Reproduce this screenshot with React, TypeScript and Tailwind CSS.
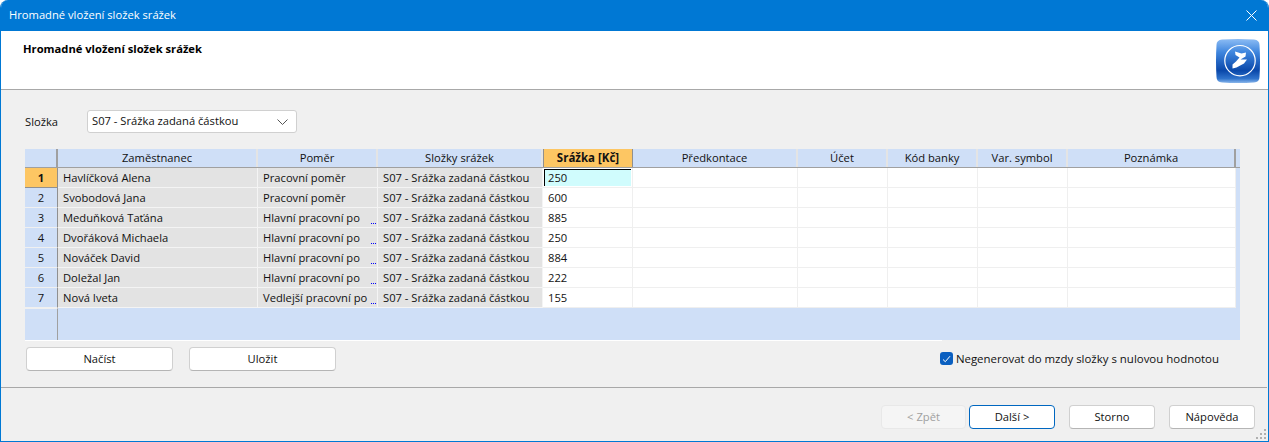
import React from 'react';

const rows = [
  ['Havlíčková Alena', 'Pracovní poměr', '250'],
  ['Svobodová Jana', 'Pracovní poměr', '600'],
  ['Meduňková Taťána', 'Hlavní pracovní po', '885'],
  ['Dvořáková Michaela', 'Hlavní pracovní po', '250'],
  ['Nováček David', 'Hlavní pracovní po', '884'],
  ['Doležal Jan', 'Hlavní pracovní po', '222'],
  ['Nová Iveta', 'Vedlejší pracovní po', '155'],
];

const emptyCols = ['w-[165px]', 'w-[90px]', 'w-[90px]', 'w-[90px]', 'w-[168px]'];

const Logo = () => (
  <svg width="44" height="44" viewBox="0 0 44 44">
    <defs>
      <linearGradient id="logoBg" x1="0" y1="0" x2="0" y2="1">
        <stop offset="0" stopColor="#8cbcf4" />
        <stop offset="0.3" stopColor="#3f86de" />
        <stop offset="0.72" stopColor="#0a48aa" />
        <stop offset="0.9" stopColor="#2f73cc" />
        <stop offset="1" stopColor="#8ab6ea" />
      </linearGradient>
    </defs>
    <path d="M6 0.5 Q22 -0.5 38 0.5 Q43.5 1 43.5 6 Q44.5 22 43.5 38 Q43.5 43 38 43.5 Q22 44.5 6 43.5 Q0.5 43 0.5 38 Q-0.5 22 0.5 6 Q0.5 1 6 0.5 Z" fill="url(#logoBg)" />
    <circle cx="24" cy="21.7" r="15.2" fill="none" stroke="#fff" strokeWidth="1.2" />
    <path d="M19 12.5 L25.5 14.5 L30 13.5 L29.5 17.5 L24.5 20.5 L31 20.5 L28 24.5 L20.5 28.5 L16.5 29.5 L16.5 25.5 L20 22.5 L23.5 18.5 L19.5 16 Z" fill="#fff" />
  </svg>
);

const Btn = ({ label, extra }: { label: string; extra: string }) => (
  <div className={`h-6 flex items-center justify-center rounded-[4px] border ${extra}`}>{label}</div>
);

export default function App() {
  return (
    <div className="relative w-[1269px] h-[442px] flex flex-col bg-[#f0f0f0] border-x border-b border-[#0078d4] rounded-t-[8px] overflow-hidden text-[11.2px] text-[#111111] font-['Open_Sans','Noto_Sans',sans-serif]">
      {/* title bar */}
      <div className="h-[31px] shrink-0 bg-[#0078d4] flex items-center justify-between pl-2 pr-[11px] text-white">
        <span>Hromadné vložení složek srážek</span>
        <svg width="11" height="11" viewBox="0 0 11 11" stroke="#fff" strokeWidth="1" fill="none">
          <path d="M0.5 0.5 L10.5 10.5 M10.5 0.5 L0.5 10.5" />
        </svg>
      </div>

      {/* header */}
      <div className="h-[59px] shrink-0 bg-white border-b border-[#a8a8a8] flex justify-between pl-[22px] pr-[8px]">
        <span className="mt-[10px] font-bold text-black leading-[16px]">Hromadné vložení složek srážek</span>
        <div className="mt-[8px]">
          <Logo />
        </div>
      </div>

      {/* picker */}
      <div className="flex items-center mt-[20px] pl-[24px] h-[23px] shrink-0">
        <span className="w-[62px] pt-[2px]">Složka</span>
        <div className="w-[210px] h-[23px] bg-white border border-[#d0d0d0] rounded-[3px] flex items-center justify-between pl-[4px] pr-[8px]">
          <span>S07 - Srážka zadaná částkou</span>
          <svg width="11" height="6" viewBox="0 0 11 6" fill="none" stroke="#555" strokeWidth="1">
            <path d="M0.5 0.5 L5.5 5.5 L10.5 0.5" />
          </svg>
        </div>
      </div>

      {/* grid */}
      <div className="ml-[24px] mt-[16px] w-[1215px] h-[191px] shrink-0 bg-[#cfdff7] flex flex-col overflow-hidden">
        <div className="flex h-[19px] shrink-0 border-b border-[#a0a0a0] text-center leading-[18px]">
          <div className="w-[33px] border-r-2 border-[#a0a0a0]" />
          <div className="w-[200px] border-r-2 border-[#e4e4e4]">Zaměstnanec</div>
          <div className="w-[120px] border-r-2 border-[#e4e4e4]">Poměr</div>
          <div className="w-[165px] border-r-2 border-[#e4e4e4]">Složky srážek</div>
          <div className="w-[90px] bg-[#fdc663] font-bold text-[11.5px] border-x border-[#909090]">Srážka [Kč]</div>
          <div className="w-[165px] border-r-2 border-[#e4e4e4]">Předkontace</div>
          <div className="w-[90px] border-r-2 border-[#e4e4e4]">Účet</div>
          <div className="w-[90px] border-r-2 border-[#e4e4e4]">Kód banky</div>
          <div className="w-[90px] border-r-2 border-[#e4e4e4]">Var. symbol</div>
          <div className="w-[168px] border-r-2 border-[#a0a0a0]">Poznámka</div>
        </div>
        {rows.map((r, i) => (
          <div key={i} className="flex h-5 shrink-0 leading-[19px]">
            <div className={`w-[33px] shrink-0 text-center border-r border-b border-r-[#909090] ${i === 0 ? 'bg-[#fdc663] font-bold border-b-[#909090]' : 'border-b-[#f0f0f0]'}`}>{i + 1}</div>
            <div className="w-[200px] shrink-0 bg-[#e3e3e3] border-r border-b border-[#f4f4f4] pl-[5px]">{r[0]}</div>
            <div className="relative w-[120px] shrink-0 bg-[#e3e3e3] border-r border-b border-[#f4f4f4] pl-[5px] whitespace-nowrap overflow-hidden">
              {r[1]}
              {i > 1 && <span className="absolute right-[1px] bottom-[3px] w-[5px] h-0 border-b border-dotted border-[#0000ff]" />}
            </div>
            <div className="w-[165px] shrink-0 bg-[#e3e3e3] border-r border-b border-[#f4f4f4] pl-[5px] whitespace-nowrap">S07 - Srážka zadaná částkou</div>
            <div className="w-[90px] shrink-0 bg-white border-r border-b border-[#efefef] pl-[5px]">
              {i === 0 ? (
                <div className="-ml-[4px] mt-[1px] w-[87px] h-[17px] bg-[#d0fcfd] border-t border-l border-black pl-[3px] leading-[16px]">{r[2]}</div>
              ) : r[2]}
            </div>
            {emptyCols.map((w, j) => (
              <div key={j} className={`${w} shrink-0 bg-white border-r border-b border-[#efefef]`} />
            ))}
          </div>
        ))}
        <div className="flex-1 w-[33px] border-r border-t border-[#a0a0a0] border-t-[#f0f0f0]" />
      </div>
      <div className="ml-[24px] h-[1px] w-[917px] bg-white shrink-0" />

      {/* load/save + checkbox */}
      <div className="flex items-center mt-[6px] pl-[25px] h-6 shrink-0">
        <Btn label="Načíst" extra="w-[147px] bg-white border-[#d0d0d0] border-b-[#b5b5b5]" />
        <Btn label="Uložit" extra="w-[147px] ml-[16px] bg-white border-[#d0d0d0] border-b-[#b5b5b5]" />
        <div className="ml-auto mr-[49px] flex items-center">
          <div className="w-[13px] h-[13px] rounded-[3px] bg-[#0a5fc0] flex items-center justify-center">
            <svg width="9" height="8" viewBox="0 0 9 8" fill="none" stroke="#fff" strokeWidth="1">
              <path d="M1 4.5 L3.3 6.7 L8 1.2" />
            </svg>
          </div>
          <span className="ml-[3px] text-[11.45px]">Negenerovat do mzdy složky s nulovou hodnotou</span>
        </div>
      </div>

      {/* footer */}
      <div className="mt-[16px] h-[1px] bg-[#a8a8a8] shrink-0 mr-[1px]" />
      <div className="flex mt-[17px] pl-[880px] shrink-0">
        <Btn label="< Zpět" extra="w-[85px] bg-[#f5f5f5] border-[#e8e8e8] text-[#a0a0a0]" />
        <Btn label="Další >" extra="w-[86px] ml-[3px] bg-white border-[#0067c0]" />
        <Btn label="Storno" extra="w-[86px] ml-[14px] bg-white border-[#d0d0d0] border-b-[#b5b5b5]" />
        <Btn label="Nápověda" extra="w-[86px] ml-[14px] bg-white border-[#d0d0d0] border-b-[#b5b5b5]" />
      </div>

      {/* resize grip */}
      <svg className="absolute right-[1px] bottom-[1px]" width="11" height="11" viewBox="0 0 11 11" fill="#b0b0b0">
        <rect x="8" y="0" width="2" height="2" />
        <rect x="4" y="4" width="2" height="2" />
        <rect x="8" y="4" width="2" height="2" />
        <rect x="0" y="8" width="2" height="2" />
        <rect x="4" y="8" width="2" height="2" />
        <rect x="8" y="8" width="2" height="2" />
      </svg>
    </div>
  );
}
